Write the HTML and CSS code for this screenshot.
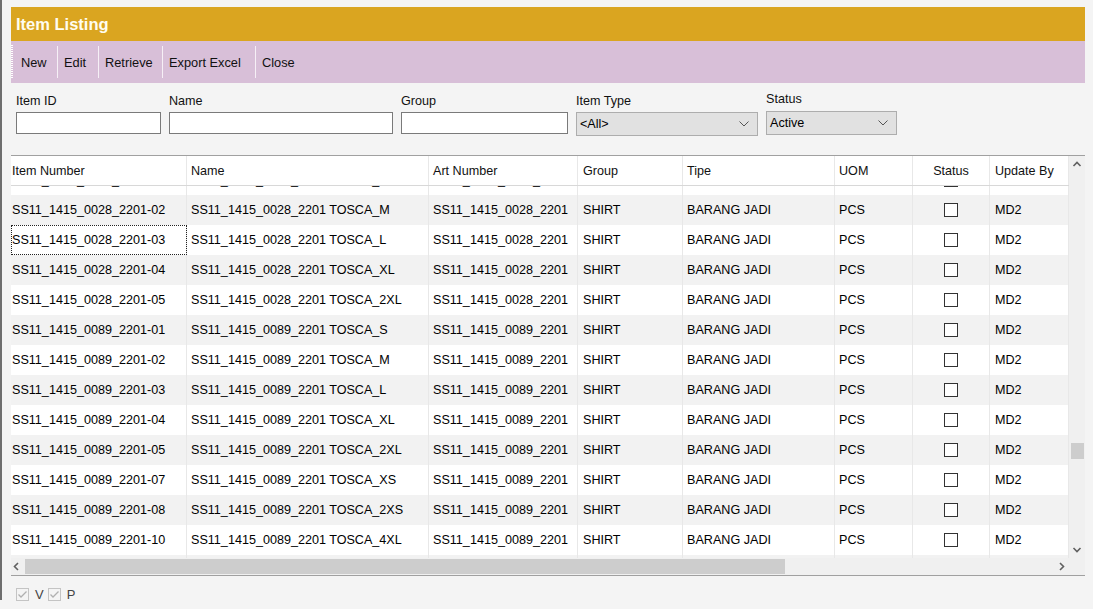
FILE: index.html
```html
<!DOCTYPE html>
<html>
<head>
<meta charset="utf-8">
<title>Item Listing</title>
<link rel="stylesheet" href="styles.css">
</head>
<body>
<div class="window">
  <div class="content">
    <div class="title">Item Listing</div>
    <div class="toolbar">
      <span class="grip"></span>
      <span class="tb-btn w-new">New</span><span class="tb-sep"></span>
      <span class="tb-btn w-edit">Edit</span><span class="tb-sep"></span>
      <span class="tb-btn w-retrieve">Retrieve</span><span class="tb-sep"></span>
      <span class="tb-btn w-export">Export Excel</span><span class="tb-sep"></span>
      <span class="tb-btn">Close</span>
    </div>
    <div class="filters">
      <div class="field f-id"><div class="lbl">Item ID</div><div class="input"></div></div>
      <div class="field f-name"><div class="lbl">Name</div><div class="input"></div></div>
      <div class="field f-group"><div class="lbl">Group</div><div class="input"></div></div>
      <div class="field f-type"><div class="lbl">Item Type</div><div class="select"><span>&lt;All&gt;</span><svg class="dd" width="10" height="6" viewBox="0 0 10 6"><path d="M0.5 0.5 L5 5 L9.5 0.5" fill="none" stroke="#555" stroke-width="1"/></svg></div></div>
      <div class="field f-status"><div class="lbl">Status</div><div class="select"><span>Active</span><svg class="dd" width="10" height="6" viewBox="0 0 10 6"><path d="M0.5 0.5 L5 5 L9.5 0.5" fill="none" stroke="#555" stroke-width="1"/></svg></div></div>
    </div>
    <div class="grid">
      <div class="grid-main">
        <div class="grid-view">
          <div class="row head">
            <div class="c first">Item Number</div>
            <div class="c">Name</div>
            <div class="c">Art Number</div>
            <div class="c p5">Group</div>
            <div class="c">Tipe</div>
            <div class="c">UOM</div>
            <div class="c center">Status</div>
            <div class="c p5">Update By</div>
          </div>
          <div class="body">
            <div class="body-inner">
              <div class="row"><div class="c first">SS11_1415_0028_2201-01</div><div class="c">SS11_1415_0028_2201 TOSCA_S</div><div class="c">SS11_1415_0028_2201</div><div class="c p5">SHIRT</div><div class="c">BARANG JADI</div><div class="c">PCS</div><div class="c center"><span class="cb"></span></div><div class="c p5">MD2</div></div>
              <div class="row alt"><div class="c first">SS11_1415_0028_2201-02</div><div class="c">SS11_1415_0028_2201 TOSCA_M</div><div class="c">SS11_1415_0028_2201</div><div class="c p5">SHIRT</div><div class="c">BARANG JADI</div><div class="c">PCS</div><div class="c center"><span class="cb"></span></div><div class="c p5">MD2</div></div>
              <div class="row"><div class="c first focus">SS11_1415_0028_2201-03</div><div class="c">SS11_1415_0028_2201 TOSCA_L</div><div class="c">SS11_1415_0028_2201</div><div class="c p5">SHIRT</div><div class="c">BARANG JADI</div><div class="c">PCS</div><div class="c center"><span class="cb"></span></div><div class="c p5">MD2</div></div>
              <div class="row alt"><div class="c first">SS11_1415_0028_2201-04</div><div class="c">SS11_1415_0028_2201 TOSCA_XL</div><div class="c">SS11_1415_0028_2201</div><div class="c p5">SHIRT</div><div class="c">BARANG JADI</div><div class="c">PCS</div><div class="c center"><span class="cb"></span></div><div class="c p5">MD2</div></div>
              <div class="row"><div class="c first">SS11_1415_0028_2201-05</div><div class="c">SS11_1415_0028_2201 TOSCA_2XL</div><div class="c">SS11_1415_0028_2201</div><div class="c p5">SHIRT</div><div class="c">BARANG JADI</div><div class="c">PCS</div><div class="c center"><span class="cb"></span></div><div class="c p5">MD2</div></div>
              <div class="row alt"><div class="c first">SS11_1415_0089_2201-01</div><div class="c">SS11_1415_0089_2201 TOSCA_S</div><div class="c">SS11_1415_0089_2201</div><div class="c p5">SHIRT</div><div class="c">BARANG JADI</div><div class="c">PCS</div><div class="c center"><span class="cb"></span></div><div class="c p5">MD2</div></div>
              <div class="row"><div class="c first">SS11_1415_0089_2201-02</div><div class="c">SS11_1415_0089_2201 TOSCA_M</div><div class="c">SS11_1415_0089_2201</div><div class="c p5">SHIRT</div><div class="c">BARANG JADI</div><div class="c">PCS</div><div class="c center"><span class="cb"></span></div><div class="c p5">MD2</div></div>
              <div class="row alt"><div class="c first">SS11_1415_0089_2201-03</div><div class="c">SS11_1415_0089_2201 TOSCA_L</div><div class="c">SS11_1415_0089_2201</div><div class="c p5">SHIRT</div><div class="c">BARANG JADI</div><div class="c">PCS</div><div class="c center"><span class="cb"></span></div><div class="c p5">MD2</div></div>
              <div class="row"><div class="c first">SS11_1415_0089_2201-04</div><div class="c">SS11_1415_0089_2201 TOSCA_XL</div><div class="c">SS11_1415_0089_2201</div><div class="c p5">SHIRT</div><div class="c">BARANG JADI</div><div class="c">PCS</div><div class="c center"><span class="cb"></span></div><div class="c p5">MD2</div></div>
              <div class="row alt"><div class="c first">SS11_1415_0089_2201-05</div><div class="c">SS11_1415_0089_2201 TOSCA_2XL</div><div class="c">SS11_1415_0089_2201</div><div class="c p5">SHIRT</div><div class="c">BARANG JADI</div><div class="c">PCS</div><div class="c center"><span class="cb"></span></div><div class="c p5">MD2</div></div>
              <div class="row"><div class="c first">SS11_1415_0089_2201-07</div><div class="c">SS11_1415_0089_2201 TOSCA_XS</div><div class="c">SS11_1415_0089_2201</div><div class="c p5">SHIRT</div><div class="c">BARANG JADI</div><div class="c">PCS</div><div class="c center"><span class="cb"></span></div><div class="c p5">MD2</div></div>
              <div class="row alt"><div class="c first">SS11_1415_0089_2201-08</div><div class="c">SS11_1415_0089_2201 TOSCA_2XS</div><div class="c">SS11_1415_0089_2201</div><div class="c p5">SHIRT</div><div class="c">BARANG JADI</div><div class="c">PCS</div><div class="c center"><span class="cb"></span></div><div class="c p5">MD2</div></div>
              <div class="row"><div class="c first">SS11_1415_0089_2201-10</div><div class="c">SS11_1415_0089_2201 TOSCA_4XL</div><div class="c">SS11_1415_0089_2201</div><div class="c p5">SHIRT</div><div class="c">BARANG JADI</div><div class="c">PCS</div><div class="c center"><span class="cb"></span></div><div class="c p5">MD2</div></div>
              <div class="row alt"><div class="c first">SS11_1415_0089_2201-11</div><div class="c">SS11_1415_0089_2201 TOSCA_5XL</div><div class="c">SS11_1415_0089_2201</div><div class="c p5">SHIRT</div><div class="c">BARANG JADI</div><div class="c">PCS</div><div class="c center"><span class="cb"></span></div><div class="c p5">MD2</div></div>
            </div>
          </div>
        </div>
        <div class="vscroll">
          <svg class="arr" width="16" height="16" viewBox="0 0 16 16"><path d="M4.5 10 L8 6.5 L11.5 10" fill="none" stroke="#606060" stroke-width="1.6"/></svg>
          <div class="vtrack"><div class="vthumb"></div></div>
          <svg class="arr" width="16" height="16" viewBox="0 0 16 16"><path d="M4.5 6 L8 9.5 L11.5 6" fill="none" stroke="#606060" stroke-width="1.6"/></svg>
        </div>
      </div>
      <div class="hbar">
        <div class="hscroll">
          <svg class="arr" width="14" height="17" viewBox="0 0 14 17"><path d="M7 5 L3.5 8.5 L7 12" fill="none" stroke="#606060" stroke-width="1.6"/></svg>
          <div class="htrack"><div class="hthumb"></div></div>
          <svg class="arr" width="14" height="17" viewBox="0 0 14 17"><path d="M5 5 L8.5 8.5 L5 12" fill="none" stroke="#606060" stroke-width="1.6"/></svg>
        </div>
        <div class="corner"></div>
      </div>
    </div>
    <div class="footer">
      <span class="dcb"><svg width="13" height="13" viewBox="0 0 13 13"><rect x="0.5" y="0.5" width="12" height="12" fill="#f4f4f4" stroke="#c4c4c4"/><path d="M2.5 6.5 L5 9 L10.5 3.5" fill="none" stroke="#b0b0b0" stroke-width="1.3"/></svg></span><span class="dlbl">V</span>
      <span class="dcb"><svg width="13" height="13" viewBox="0 0 13 13"><rect x="0.5" y="0.5" width="12" height="12" fill="#f4f4f4" stroke="#c4c4c4"/><path d="M2.5 6.5 L5 9 L10.5 3.5" fill="none" stroke="#b0b0b0" stroke-width="1.3"/></svg></span><span class="dlbl">P</span>
    </div>
  </div>
</div>
</body>
</html>
```
FILE: styles.css
```css
* { box-sizing: border-box; }
html, body { margin: 0; padding: 0; }
body {
  background: #f4f4f4;
  font-family: "Liberation Sans", Arial, sans-serif;
  font-size: 12.6px;
  color: #000;
  width: 1093px;
  height: 609px;
  overflow: hidden;
}
.window {
  border-left: 2px solid #6e6e6e;
  height: 600px;
  padding: 7px 0 0 9px;
}
.content { width: 1074px; }

.title {
  height: 34px;
  line-height: 34px;
  background: #daa520;
  color: #fffdf0;
  font-weight: bold;
  font-size: 16.5px;
  padding-left: 5px;
}

.toolbar {
  height: 42px;
  background: #d8bfd8;
  display: flex;
  align-items: center;
  font-size: 12.8px;
}
.grip {
  width: 3px;
  height: 34px;
  margin-right: 1px;
  background-image: linear-gradient(#ffffff 50%, transparent 50%);
  background-size: 2px 2px;
  background-repeat: repeat-y;
}
.tb-btn { padding: 0 10px 0 6px; color: #111; white-space: nowrap; }
.w-new { width: 42px; }
.w-edit { width: 40px; }
.w-retrieve { width: 63px; }
.w-export { width: 92px; }
.tb-sep { width: 1px; height: 32px; background: #f6f0f6; }

.filters {
  height: 72px;
  padding: 11px 0 0 5px;
  display: flex;
  gap: 8px;
  align-items: flex-start;
}
.field .lbl { line-height: 15px; margin-bottom: 3px; color: #111; }
.input { height: 22px; background: #fff; border: 1px solid #7a7a7a; }
.f-id { width: 145px; }
.f-name { width: 224px; }
.f-group { width: 167px; }
.f-type { width: 182px; }
.f-status { width: 131px; margin-top: -2px; }
.f-status .lbl { margin-bottom: 4px; }
.select {
  height: 24px;
  background: #e1e1e1;
  border: 1px solid #adadad;
  display: flex;
  align-items: center;
  justify-content: space-between;
  padding: 0 8px 0 3px;
  color: #000;
}
.dd { display: block; }

.grid { border-top: 1px solid #a0a0a0; }
.grid-main { display: flex; height: 402px; }
.grid-view { width: 1058px; background: #fff; }
.row {
  display: grid;
  grid-template-columns: 176px 242px 149px 105px 152px 78px 77px 79px;
  height: 30px;
  background: #fff;
}
.row.alt { background: #f2f2f2; }
.row.head { height: 30px; border-bottom: 1px solid #d8d8d8; color: #111; }
.c {
  display: flex;
  align-items: center;
  padding-left: 4px;
  border-right: 1px solid #e8e8e8;
  white-space: nowrap;
  overflow: hidden;
}
.c.p5 { padding-left: 5px; }
.c.first { padding-left: 1px; }
.c.center { justify-content: center; padding-left: 0; }
.c.focus { outline: 1px dotted #222; outline-offset: -1px; }
.body { height: 372px; overflow: hidden; }
.body-inner { margin-top: -21px; }
.cb { width: 14px; height: 14px; border: 1px solid #333; background: #fff; display: block; }

.vscroll {
  width: 16px;
  background: #f0f0f0;
  display: flex;
  flex-direction: column;
}
.arr { display: block; flex: none; }
.vtrack { flex: 1; padding-top: 271px; }
.vthumb { width: 13px; height: 16px; margin-left: 2px; background: #cdcdcd; }

.hbar { display: flex; height: 17px; border-bottom: 1px solid #a0a0a0; box-sizing: content-box; }
.hscroll { width: 1058px; display: flex; background: #f0f0f0; }
.htrack { flex: 1; padding-top: 1px; }
.hthumb { width: 760px; height: 15px; background: #cdcdcd; }
.corner { width: 16px; background: #f0f0f0; }

.footer {
  display: flex;
  align-items: center;
  padding: 11px 0 0 5px;
  color: #444;
  font-size: 13px;
}
.dcb svg { display: block; }
.dlbl { margin: 0 4px 0 6px; }
```
